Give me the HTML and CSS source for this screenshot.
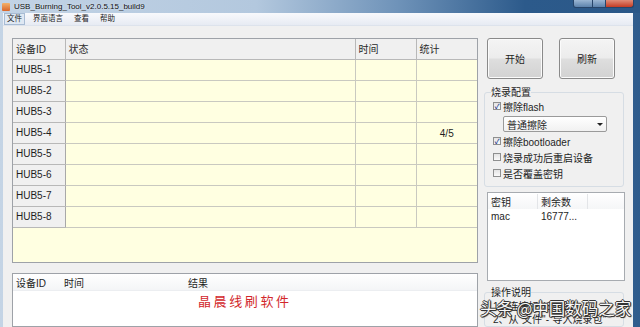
FILE: index.html
```html
<!DOCTYPE HTML>
<html lang="zh-CN">
<head>
    <meta charset="UTF-8">
    <title>USB_Burning_Tool_v2.0.5.15_build9</title>
    <link rel="stylesheet" href="styles.css">
</head>
<body>
    <div class="window">
        <div class="titlebar">
            <span class="app-icon"></span>
            <span class="title">USB_Burning_Tool_v2.0.5.15_build9</span>
            <div class="controls">
                <span class="ctl min"></span>
                <span class="ctl max"></span>
                <span class="ctl close"></span>
            </div>
        </div>

        <div class="frame">
            <div class="client">
                <div class="menubar">
                    <span class="menu-item active">文件</span>
                    <span class="menu-item">界面语言</span>
                    <span class="menu-item">查看</span>
                    <span class="menu-item">帮助</span>
                </div>

                <div class="content">
                    <!-- device grid and log -->
                    <div class="left">
                        <div class="grid">
                            <table class="devices">
                                <colgroup>
                                    <col class="c-id">
                                    <col class="c-state">
                                    <col class="c-time">
                                    <col class="c-stat">
                                </colgroup>
                                <thead>
                                    <tr><th>设备ID</th><th>状态</th><th>时间</th><th>统计</th></tr>
                                </thead>
                                <tbody>
                                    <tr><th>HUB5-1</th><td></td><td></td><td></td></tr>
                                    <tr><th>HUB5-2</th><td></td><td></td><td></td></tr>
                                    <tr><th>HUB5-3</th><td></td><td></td><td></td></tr>
                                    <tr><th>HUB5-4</th><td></td><td></td><td class="stat">4/5</td></tr>
                                    <tr><th>HUB5-5</th><td></td><td></td><td></td></tr>
                                    <tr><th>HUB5-6</th><td></td><td></td><td></td></tr>
                                    <tr><th>HUB5-7</th><td></td><td></td><td></td></tr>
                                    <tr><th>HUB5-8</th><td></td><td></td><td></td></tr>
                                </tbody>
                            </table>
                        </div>

                        <div class="log">
                            <div class="log-head">
                                <span class="lh-id">设备ID</span>
                                <span class="lh-time">时间</span>
                                <span class="lh-result">结果</span>
                            </div>
                            <div class="log-note">晶晨线刷软件</div>
                        </div>
                    </div>

                    <!-- controls on the right -->
                    <div class="right">
                        <div class="buttons">
                            <button class="btn">开始</button>
                            <button class="btn">刷新</button>
                        </div>

                        <fieldset class="group config">
                            <legend>烧录配置</legend>
                            <label class="check"><span class="cb checked">✓</span>擦除flash</label>
                            <div class="select">
                                <span>普通擦除</span>
                                <span class="arrow"></span>
                            </div>
                            <label class="check"><span class="cb checked">✓</span>擦除bootloader</label>
                            <label class="check"><span class="cb"></span>烧录成功后重启设备</label>
                            <label class="check"><span class="cb"></span>是否覆盖密钥</label>
                        </fieldset>

                        <div class="keys">
                            <div class="keys-head">
                                <span class="k-name">密钥</span>
                                <span class="k-left">剩余数</span>
                            </div>
                            <div class="keys-row">
                                <span class="k-name">mac</span>
                                <span class="k-left">16777...</span>
                            </div>
                        </div>

                        <fieldset class="group help">
                            <legend>操作说明</legend>
                            <p>1、连接好USB设备</p>
                            <p>2、从"文件"-"导入烧录包"</p>
                        </fieldset>
                    </div>
                </div>
            </div>
        </div>

        <div class="watermark">头条 @中国数码之家</div>
    </div>
</body>
</html>
```

FILE: styles.css
```css
/* Base */
* {
    box-sizing: border-box;
}

body {
    margin: 0;
    width: 640px;
    height: 327px;
    overflow: hidden;
    font-family: "Liberation Sans", "Noto Sans CJK SC", sans-serif;
    font-size: 10px;
    color: #1e1e1e;
}

/* Window frame */
.window {
    position: relative;
    height: 327px;
    display: flex;
    flex-direction: column;
    background: linear-gradient(to right, #c4d4e5 0, #a9c0d8 45%, #4f79a6 80%, #2f5c8c 100%);
}

.titlebar {
    height: 13px;
    display: flex;
    align-items: center;
    padding-left: 2px;
    background: linear-gradient(to right, #c2d3e5 0, #b3c8de 40%, #6f93b9 62%, #2c5a8b 82%, #2b5888 100%);
}

.app-icon {
    width: 8px;
    height: 8px;
    border-radius: 1px;
    background: linear-gradient(#f3b26b, #d9662b);
}

.title {
    margin-left: 4px;
    font-size: 8px;
    line-height: 10px;
    color: #101010;
    text-shadow: 0 0 2px #e8f0f8;
}

.controls {
    margin-left: auto;
    margin-right: 6px;
    align-self: flex-start;
    display: flex;
}

.ctl {
    height: 8px;
    border: 1px solid #27456a;
    border-top: none;
    background: linear-gradient(#9bb6d3, #5d83ad);
}

.ctl.min {
    width: 20px;
    border-radius: 0 0 0 3px;
}

.ctl.max {
    width: 13px;
    border-left: none;
}

.ctl.close {
    width: 28px;
    border-left: none;
    border-radius: 0 0 3px 0;
    background: linear-gradient(#e08c78, #c43c24);
}

.frame {
    flex: 1;
    min-height: 0;
    display: flex;
    padding: 0 7px 0 3px;
}

.client {
    flex: 1;
    min-width: 0;
    display: flex;
    flex-direction: column;
    background: #f0f0f0;
}

/* Menu */
.menubar {
    height: 13px;
    display: flex;
    align-items: center;
    padding-left: 1px;
    background: linear-gradient(#f8f9fc, #e7ebf3);
    border-bottom: 1px solid #dde3ec;
}

.menu-item {
    font-size: 7.5px;
    line-height: 10px;
    padding: 0 2px;
    margin-right: 5px;
    border: 1px solid transparent;
}

.menu-item.active {
    border-color: #a8bcd4;
    background: #dfe8f3;
}

/* Main area */
.content {
    flex: 1;
    min-height: 0;
    display: flex;
    gap: 6px;
    padding: 12px 0 0 9px;
}

.left {
    width: 466px;
    display: flex;
    flex-direction: column;
    gap: 10px;
}

.grid {
    height: 225px;
    border: 1px solid #9ea2a8;
    background: #ffffe1;
}

.devices {
    width: 464px;
    table-layout: fixed;
    border-collapse: collapse;
}

.c-id { width: 52px; }
.c-state { width: 290px; }
.c-time { width: 61px; }
.c-stat { width: 61px; }

.devices th,
.devices td {
    padding: 0 0 0 3px;
    text-align: left;
    font-weight: normal;
    border-right: 1px solid #c9c9c0;
    border-bottom: 1px solid #c9c9c0;
    white-space: nowrap;
}

.devices thead th {
    height: 20px;
    background: #f0f0f0;
    color: #2a2a2a;
    border-color: #b8b8b8;
}

.devices tbody tr {
    height: 21px;
}

.devices tbody th {
    background: #f0f0f0;
    border-right-color: #a8a8a8;
    border-bottom-color: #b8b8b8;
}

.devices td.stat {
    text-align: center;
    padding: 2px 0 0 0;
}

.devices tr > :last-child {
    border-right: none;
}

/* Log list */
.log {
    flex: 1;
    border: 1px solid #9ea2a8;
    background: #fff;
}

.log-head {
    height: 17px;
    display: flex;
    align-items: center;
    background: linear-gradient(#ffffff, #f4f5f7);
    border-bottom: 1px solid #eceef1;
}

.log-head span {
    padding-left: 3px;
}

.lh-id { width: 48px; }
.lh-time { width: 124px; }

.log-note {
    padding: 2px 0 0 185px;
    font-family: "Noto Sans CJK SC", sans-serif;
    font-size: 13px;
    line-height: 16px;
    letter-spacing: 2.6px;
    color: #d2272b;
}

/* Right panel */
.right {
    width: 142px;
    display: flex;
    flex-direction: column;
}

.buttons {
    display: flex;
    gap: 16px;
    padding-left: 3px;
}

.btn {
    width: 56px;
    height: 41px;
    padding: 0;
    font-family: "Noto Sans CJK SC", sans-serif;
    font-size: 10px;
    color: #1e1e1e;
    border: 1px solid #8a8a8a;
    border-radius: 3px;
    background: linear-gradient(#f4f4f4 0, #ececec 48%, #dedede 52%, #d2d2d2 100%);
    box-shadow: inset 0 0 0 1px #fbfbfb;
}

.group {
    margin: 8px 2px 0 0;
    padding: 0 0 5px 8px;
    border: 1px solid #d6dde4;
    border-radius: 3px;
    min-width: 0;
}

.group legend {
    margin-left: -2px;
    padding: 0;
    font-size: 10px;
    line-height: 11px;
}

.check {
    height: 16px;
    display: flex;
    align-items: center;
    gap: 2px;
}

.cb {
    width: 8px;
    height: 8px;
    border: 1px solid #8e8f8f;
    background: linear-gradient(#e4e4e4, #fafafa);
    font-size: 7px;
    line-height: 7px;
    text-align: center;
    color: #2a3f8f;
    font-weight: bold;
}

.select {
    width: 104px;
    height: 16px;
    margin: 2px 0 1px 10px;
    display: flex;
    align-items: center;
    justify-content: space-between;
    padding: 0 3px;
    border: 1px solid #9a9a9a;
    border-radius: 2px;
    background: linear-gradient(#ffffff, #f1f1f1);
}

.arrow {
    width: 0;
    height: 0;
    border-left: 3px solid transparent;
    border-right: 3px solid transparent;
    border-top: 3px solid #222;
}

.keys {
    height: 97px;
    margin: 5px 1px 0 3px;
    border: 1px solid #a7abb0;
    background: #fff;
}

.keys-head,
.keys-row {
    height: 16px;
    display: flex;
    align-items: center;
}

.keys-head {
    background: linear-gradient(#ffffff, #f5f6f7);
}

.keys-head span {
    border-right: 1px solid #e3e5e8;
}

.k-name {
    width: 50px;
    padding-left: 3px;
}

.k-left {
    width: 50px;
    padding-left: 3px;
}

.keys-row {
    height: 14px;
}

.help {
    margin-top: 6px;
    padding: 0 0 0 8px;
}

.help p {
    margin: 0;
    font-size: 10px;
    line-height: 13px;
    white-space: nowrap;
}

.help p:first-of-type {
    margin-top: 2px;
}

/* Overlay watermark */
.watermark {
    position: absolute;
    left: 480px;
    top: 298px;
    font-family: "Noto Sans CJK SC", sans-serif;
    font-size: 16.5px;
    line-height: 20px;
    color: #f6f6f6;
    text-shadow: 1px 0 0 #333, -1px 0 0 #333, 0 1px 0 #333, 0 -1px 0 #333, 1px 1px 1px #222;
}
```
